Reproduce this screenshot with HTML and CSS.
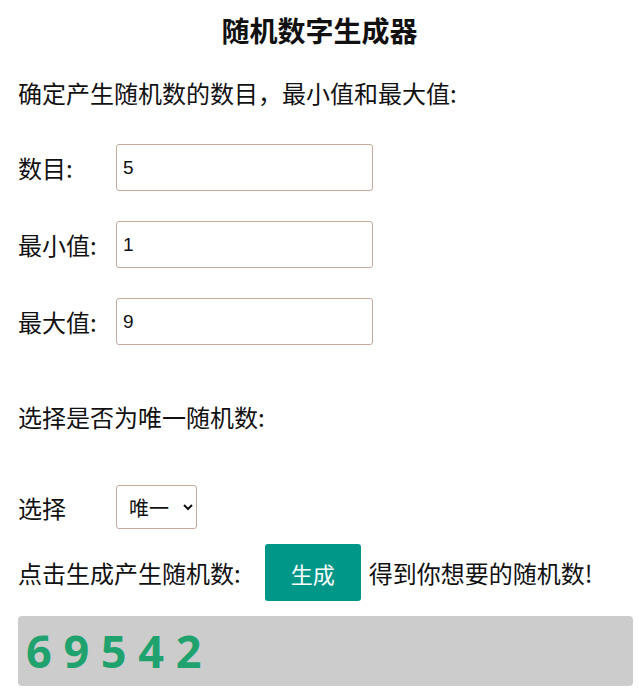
FILE: index.html
```html
<!DOCTYPE html>
<html>
<head>
  <meta charset="utf-8" />
  <meta name="viewport" content="width=device-width, initial-scale=1" />
  <title>随机数字生成器</title>
<link rel="stylesheet" href="styles.css">
</head>
<body>
<div class="container">
  <h1 class="title">随机数字生成器</h1>
  <p class="intro">确定产生随机数的数目，最小值和最大值:</p>
  <div class="row">
    <label for="count">数目:</label>
    <input type="text" id="count" value="5"/>
  </div>
  <div class="row">
    <label for="min">最小值:</label>
    <input type="text" id="min" value="1"/>
  </div>
  <div class="row">
    <label for="max">最大值:</label>
    <input type="text" id="max" value="9"/>
  </div>
  <p class="question">选择是否为唯一随机数:</p>
  <div class="row row_select">
    <label for="unique">选择</label>
    <select id="unique">
      <option>唯一</option>
      <option>可重复</option>
    </select>
  </div>
  <div class="action">
    <span>点击生成产生随机数:</span>
    <button class="gen_btn">生成</button>
    <span>得到你想要的随机数!</span>
  </div>
  <div class="result">6 9 5 4 2</div>
</div>
</body>
</html>
```

FILE: styles.css
```css
* {
  margin: 0;
  padding: 0;
  box-sizing: border-box;
  font-family: "Microsoft YaHei", "Noto Sans CJK SC", sans-serif;
}
:root {
  --text-color: #111;
  --teal-color: #009688;
  --border-color: #c4aa9c;
  --result-bg: #cccccc;
  --result-color: #1fa26d;
}
body {
  color: var(--text-color);
  background: #fff;
}
div.container {
  padding: 0 6px 0 18px;
}
h1.title {
  margin: 0 -6px 0 -18px;
  font-size: 28px;
  font-weight: bold;
  text-align: center;
  line-height: 32px;
  padding-top: 14px;
}
p.intro, p.question {
  font-size: 24px;
  line-height: 32px;
}
p.intro {
  margin-top: 31px;
}
div.row {
  display: flex;
  align-items: center;
  height: 47px;
  margin-top: 30px;
}
p.intro + div.row {
  margin-top: 35px;
}
div.row label {
  width: 98px;
  font-size: 24px;
  flex-shrink: 0;
}
div.row input {
  width: 257px;
  height: 47px;
  border: 1px solid var(--border-color);
  border-radius: 3px;
  padding: 0 6px;
  font-size: 19px;
  font-family: "Liberation Sans", Arial, sans-serif;
  color: #111;
}
p.question {
  margin-top: 56px;
}
div.row.row_select {
  height: 44px;
  margin-top: 52px;
}
div.row select {
  width: 81px;
  height: 44px;
  border: 1px solid var(--border-color);
  border-radius: 3px;
  padding: 0 2px 0 8px;
  font-size: 20px;
  background: #fff;
  color: #111;
}
div.action {
  display: flex;
  align-items: center;
  margin-top: 15px;
  height: 57px;
  font-size: 24px;
}
button.gen_btn {
  width: 96px;
  height: 57px;
  margin: 0 8px 0 24px;
  border: none;
  border-radius: 3px;
  background: var(--teal-color);
  color: #fff;
  font-size: 22px;
}
div.result {
  margin-top: 15px;
  height: 70px;
  background: var(--result-bg);
  border-radius: 4px;
  padding-left: 8px;
  font-family: "Open Sans", sans-serif;
  font-weight: bold;
  font-size: 45px;
  line-height: 70px;
  color: var(--result-color);
}
```
